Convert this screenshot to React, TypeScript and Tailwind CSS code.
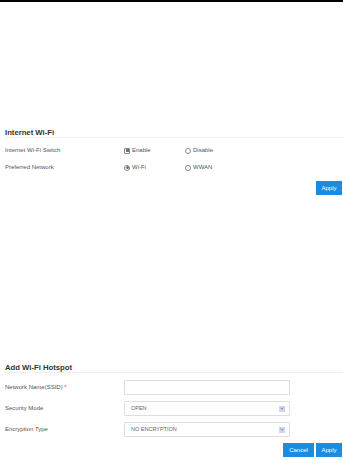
import React from "react";

const Radio = ({ checked, square }: { checked?: boolean; square?: boolean }) => (
  <span
    className={`inline-flex items-center justify-center w-[6px] h-[6px] border border-[#8a8a8a] ${square ? "rounded-[1px]" : "rounded-full"} mr-[1px]`}
  >
    {checked && <span className={`w-[3px] h-[3px] bg-[#5a7f5a] ${square ? "" : "rounded-full"}`} />}
  </span>
);

const Option = ({ label, checked, square }: { label: string; checked?: boolean; square?: boolean }) => (
  <div className="w-[61px] flex items-center gap-[1px]">
    <Radio checked={checked} square={square} />
    <span>{label}</span>
  </div>
);

const Arrow = () => (
  <span className="w-[6px] h-[6px] bg-[#cdd8ee] flex items-center justify-center">
    <svg width="4" height="3" viewBox="0 0 4 3">
      <path d="M0.4 0.6 L2 2.3 L3.6 0.6" fill="none" stroke="#6a7fa8" strokeWidth="0.8" />
    </svg>
  </span>
);

const Select = ({ value }: { value: string }) => (
  <div className="w-[166px] h-[15px] border border-[#dedede] rounded-[1px] flex items-center justify-between pl-[6px] pr-[4px] text-[5.5px] text-[#666]">
    <span>{value}</span>
    <Arrow />
  </div>
);

export default function App() {
  return (
    <div
      className="w-[343px] h-[460px] bg-white text-[#555] overflow-hidden"
      style={{ fontFamily: '"Liberation Sans", Arial, sans-serif' }}
    >
      <div className="h-[2px] bg-black" />

      <div className="mt-[126px] pl-[5px]">
        <div className="h-[10px] leading-[10px] text-[7.7px] font-bold text-[#333] border-b border-[#eeeeee]">
          Internet Wi-Fi
        </div>
        <div className="mt-[4px] text-[6px]">
          <div className="h-[17px] flex items-center">
            <div className="w-[119px]">Internet Wi-Fi Switch</div>
            <Option label="Enable" checked square />
            <Option label="Disable" />
          </div>
          <div className="h-[17px] flex items-center">
            <div className="w-[119px]">Preferred Network</div>
            <Option label="Wi-Fi" checked />
            <Option label="WWAN" />
          </div>
        </div>
        <div className="mt-[5px] flex justify-end pr-[1px]">
          <button className="w-[26px] h-[14px] bg-[#1b8de0] text-white text-[6px] flex items-center justify-center">
            Apply
          </button>
        </div>
      </div>

      <div className="mt-[168px] pl-[5px]">
        <div className="h-[10px] leading-[10px] text-[7.7px] font-bold text-[#333] border-b border-[#eeeeee]">
          Add Wi-Fi Hotspot
        </div>
        <div className="mt-[7px] text-[6px] flex flex-col gap-[6px]">
          <div className="h-[15px] flex items-center">
            <div className="w-[119px]">
              Network Name(SSID) <span className="text-[#e33]">*</span>
            </div>
            <div className="w-[166px] h-[15px] border border-[#dedede] rounded-[1px]" />
          </div>
          <div className="h-[15px] flex items-center">
            <div className="w-[119px]">Security Mode</div>
            <Select value="OPEN" />
          </div>
          <div className="h-[15px] flex items-center">
            <div className="w-[119px]">Encryption Type</div>
            <Select value="NO ENCRYPTION" />
          </div>
        </div>
        <div className="mt-[6px] flex justify-end gap-[2px] pr-[1px]">
          <button className="w-[31px] h-[14px] bg-[#1b8de0] text-white text-[6px] flex items-center justify-center">
            Cancel
          </button>
          <button className="w-[26px] h-[14px] bg-[#1b8de0] text-white text-[6px] flex items-center justify-center">
            Apply
          </button>
        </div>
      </div>
    </div>
  );
}
